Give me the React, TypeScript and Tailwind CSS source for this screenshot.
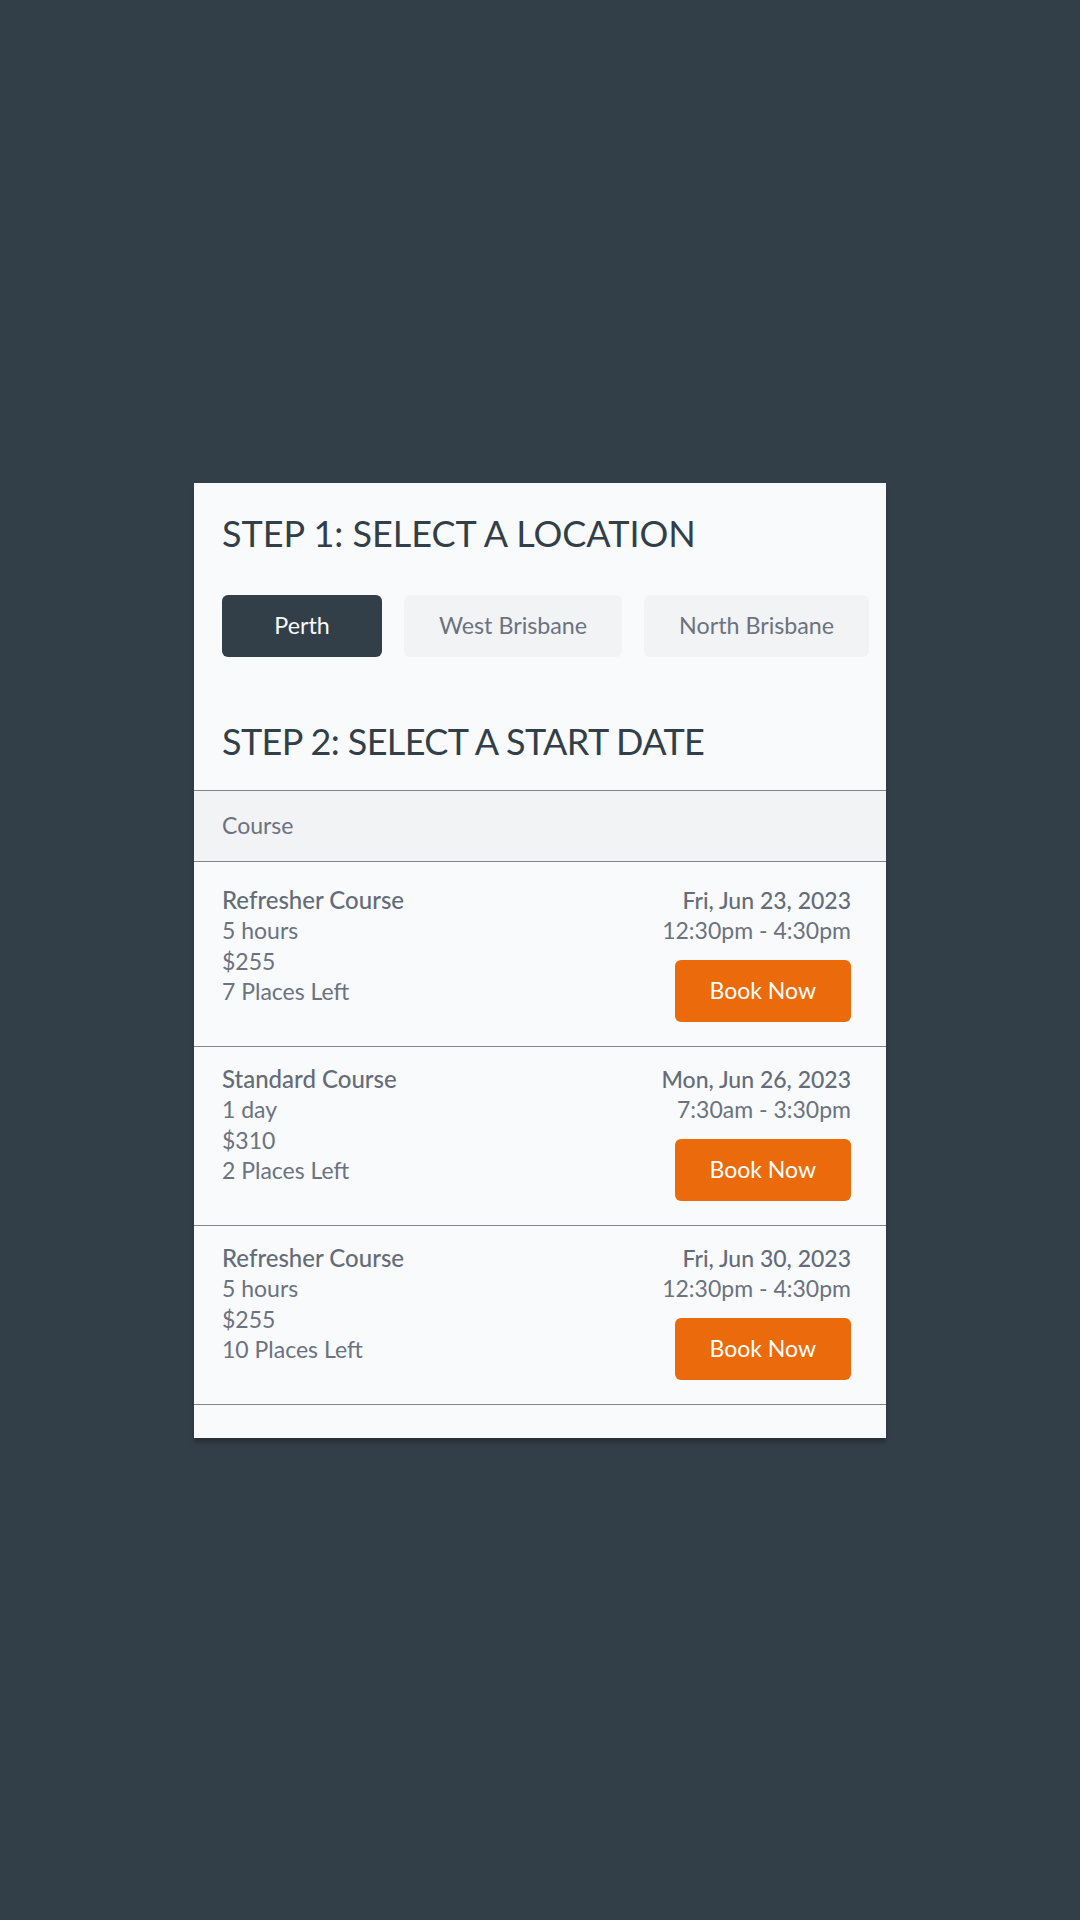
const locations = ["Perth", "West Brisbane", "North Brisbane"];

const sessions = [
  {
    name: "Refresher Course",
    length: "5 hours",
    price: "$255",
    places: "7 Places Left",
    date: "Fri, Jun 23, 2023",
    time: "12:30pm - 4:30pm",
  },
  {
    name: "Standard Course",
    length: "1 day",
    price: "$310",
    places: "2 Places Left",
    date: "Mon, Jun 26, 2023",
    time: "7:30am - 3:30pm",
  },
  {
    name: "Refresher Course",
    length: "5 hours",
    price: "$255",
    places: "10 Places Left",
    date: "Fri, Jun 30, 2023",
    time: "12:30pm - 4:30pm",
  },
];

export default function App() {
  const selected = "Perth";

  return (
    <div className="min-h-screen bg-[#333f48] flex items-center justify-center font-['Lato',sans-serif]">
      <div className="w-[692px] bg-[#f8fafc] pt-7 pb-[33px] shadow-[0_5px_4px_rgba(0,0,0,0.22)]">
        <h1 className="px-7 text-[36px] leading-[44px] text-[#333f48]">
          STEP 1: SELECT A LOCATION
        </h1>

        <div className="px-7 mt-10 flex gap-[22px]">
          {locations.map((loc) => (
            <button
              key={loc}
              className={
                loc === selected
                  ? "shrink-0 h-[62px] min-w-[160px] px-[35px] whitespace-nowrap rounded-md bg-[#333f48] text-[#f8fafc] text-[23.25px]"
                  : "shrink-0 h-[62px] min-w-[160px] px-[35px] whitespace-nowrap rounded-md bg-[#f2f3f5] text-[#6b7280] text-[23.25px]"
              }
            >
              {loc}
            </button>
          ))}
        </div>

        <h2 className="px-7 mt-[62px] text-[36px] tracking-[-0.6px] leading-[44px] text-[#333f48]">
          STEP 2: SELECT A START DATE
        </h2>

        <div className="mt-[27px] border-t border-b border-[#80868f] bg-[#f2f3f5] h-[72px] px-7 flex items-center text-[23px] text-[#6b7280]">
          Course
        </div>

        {sessions.map((s, i) => (
          <div
            key={i}
            className={
              i === 0
                ? "flex justify-between pl-7 pr-[35px] pt-[23px] pb-6 border-b border-[#80868f]"
                : "flex justify-between pl-7 pr-[35px] pt-[17px] pb-6 border-b border-[#80868f]"
            }
          >
            <div className="text-[23px] leading-[30.5px] text-[#6b7280]">
              <div className="font-medium text-[24px] text-[#646c78]">{s.name}</div>
              <div>{s.length}</div>
              <div>{s.price}</div>
              <div>{s.places}</div>
            </div>
            <div className="flex flex-col items-end text-[23px] leading-[30.5px] text-[#6b7280]">
              <div className="font-medium text-[#646c78]">{s.date}</div>
              <div>{s.time}</div>
              <button className="mt-[14px] h-[62px] px-[35px] whitespace-nowrap rounded-md bg-[#eb6a0b] text-white text-[23px]">
                Book Now
              </button>
            </div>
          </div>
        ))}
      </div>
    </div>
  );
}
